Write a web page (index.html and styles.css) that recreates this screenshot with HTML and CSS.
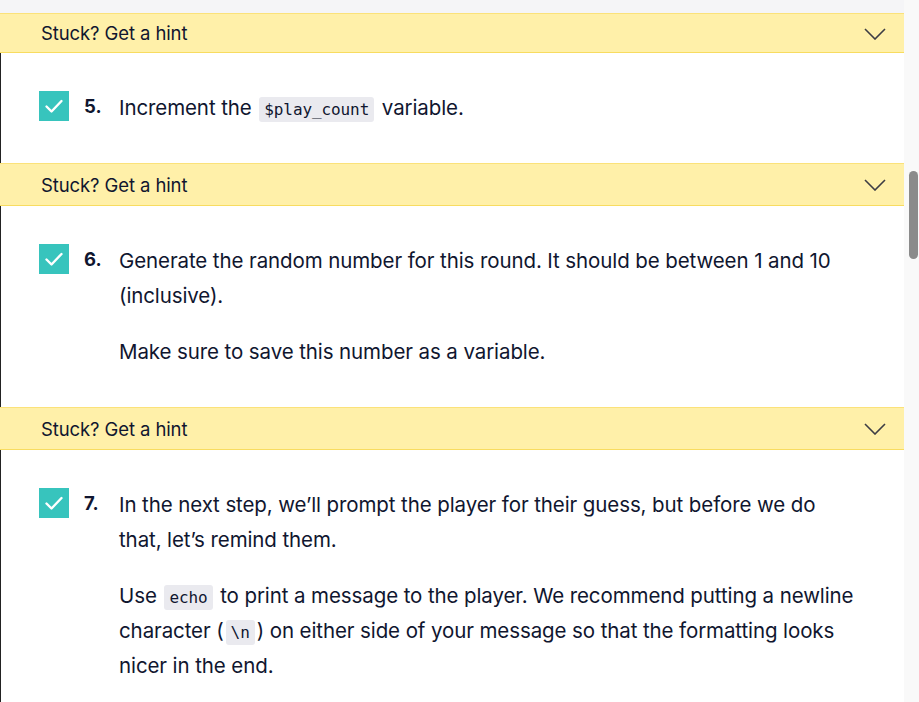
FILE: index.html
```html
<!DOCTYPE html>
<html lang="en">
<head>
<meta charset="utf-8">
<title>Steps</title>
<link rel="stylesheet" href="styles.css">
</head>
<body>
<div class="page">
  <main class="main">
    <div class="top-strip"></div>

    <div class="hint hint-first">
      <span class="hint-label">Stuck? Get a hint</span>
      <svg class="chevron" width="22" height="12" viewBox="0 0 22 12"><path d="M1 1 L11 11 L21 1" fill="none" stroke="#3d3d44" stroke-width="1.6"/></svg>
    </div>

    <section class="step">
      <span class="check"><svg width="30" height="30" viewBox="0 0 30 30"><path d="M7.5 15.5 L12.5 20.5 L22.5 10" fill="none" stroke="#fff" stroke-width="2.4" stroke-linecap="round" stroke-linejoin="round"/></svg></span>
      <span class="num">5.</span>
      <div class="body">
        <p>Increment the <code>$play_count</code> variable.</p>
      </div>
    </section>

    <div class="hint">
      <span class="hint-label">Stuck? Get a hint</span>
      <svg class="chevron" width="22" height="12" viewBox="0 0 22 12"><path d="M1 1 L11 11 L21 1" fill="none" stroke="#3d3d44" stroke-width="1.6"/></svg>
    </div>

    <section class="step">
      <span class="check"><svg width="30" height="30" viewBox="0 0 30 30"><path d="M7.5 15.5 L12.5 20.5 L22.5 10" fill="none" stroke="#fff" stroke-width="2.4" stroke-linecap="round" stroke-linejoin="round"/></svg></span>
      <span class="num">6.</span>
      <div class="body">
        <p>Generate the random number for this round. It should be between 1 and 10 (inclusive).</p>
        <p>Make sure to save this number as a variable.</p>
      </div>
    </section>

    <div class="hint">
      <span class="hint-label">Stuck? Get a hint</span>
      <svg class="chevron" width="22" height="12" viewBox="0 0 22 12"><path d="M1 1 L11 11 L21 1" fill="none" stroke="#3d3d44" stroke-width="1.6"/></svg>
    </div>

    <section class="step">
      <span class="check"><svg width="30" height="30" viewBox="0 0 30 30"><path d="M7.5 15.5 L12.5 20.5 L22.5 10" fill="none" stroke="#fff" stroke-width="2.4" stroke-linecap="round" stroke-linejoin="round"/></svg></span>
      <span class="num">7.</span>
      <div class="body">
        <p>In the next step, we’ll prompt the player for their guess, but before we do that, let’s remind them.</p>
        <p>Use <code>echo</code> to print a message to the player. We recommend putting a newline character (<code>\n</code>) on either side of your message so that the formatting looks nicer in the end.</p>
      </div>
    </section>
  </main>
  <aside class="scrollbar"><div class="thumb"></div></aside>
</div>
</body>
</html>
```

FILE: styles.css
```css
* { box-sizing: border-box; }
html, body { margin: 0; padding: 0; background: #fff; }
body {
  font-family: Inter, "Noto Sans", sans-serif;
  color: #10162f;
  overflow: hidden;
  height: 702px;
}
.page {
  display: flex;
  width: 919px;
  height: 702px;
}
.main {
  width: 904px;
  display: flex;
  flex-direction: column;
}
.top-strip {
  height: 13px;
  background: #f5f5f7;
  flex: none;
}
.hint {
  flex: none;
  height: 43px;
  background: #fff0a9;
  border-top: 1px solid #fbe27a;
  border-bottom: 1px solid #f8dc60;
  display: flex;
  align-items: center;
  justify-content: space-between;
  padding: 0 18px 0 41px;
}
.hint-first { height: 40px; }
.hint-label {
  font-size: 18.5px;
  letter-spacing: -0.1px;
}
.chevron { display: block; margin-top: 1px; }
.step {
  flex: none;
  display: flex;
  align-items: flex-start;
  border-left: 1px solid #222;
  padding: 37px 50px 38px 38px;
}
.check {
  flex: none;
  width: 30px;
  height: 30px;
  background: #37c4bd;
  margin-top: 1px;
  display: block;
}
.check svg { display: block; }
.num {
  flex: none;
  width: 35px;
  margin-left: 15px;
  font-weight: 700;
  font-size: 18.5px;
  line-height: 33px;
}
.body { flex: 1; }
.body p {
  margin: 0;
  font-size: 20.5px;
  line-height: 35px;
  letter-spacing: -0.1px;
}
.body p + p { margin-top: 21px; }
code {
  font-family: "DejaVu Sans Mono", monospace;
  font-size: 16px;
  line-height: 1;
  background: #eaeaef;
  border-radius: 3px;
  padding: 3px 5px;
  margin: 0 2px;
  color: #10162f;
}
.scrollbar {
  width: 15px;
  background: #f9f9f9;
  padding: 171px 1px 0 5px;
}
.thumb {
  width: 9px;
  height: 88px;
  background: #8b8b8b;
  border-radius: 5px;
}
```
